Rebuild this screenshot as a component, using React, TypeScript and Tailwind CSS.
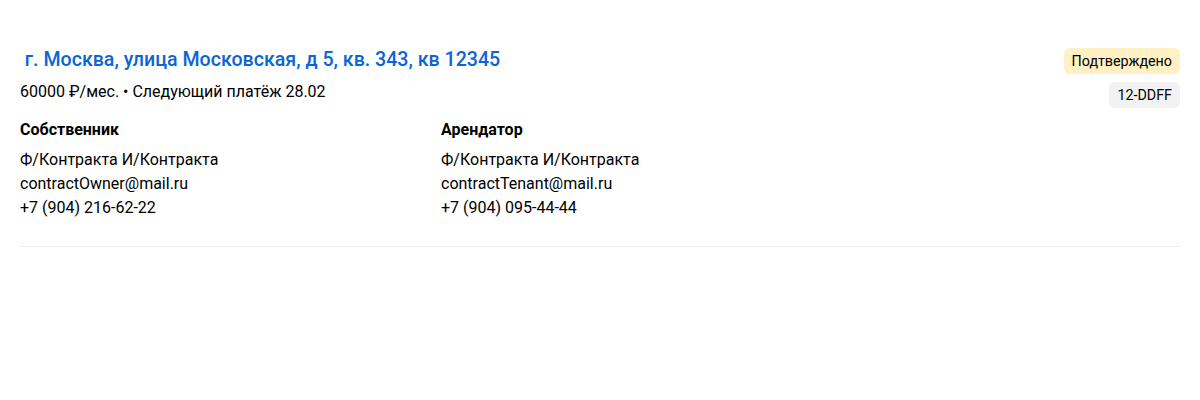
export default function App() {
  return (
    <div className="min-h-[400px] bg-white px-5 pt-12 text-black" style={{ fontFamily: "Roboto, 'Noto Sans', sans-serif" }}>
      <div className="flex items-start justify-between">
        <div>
          <a className="block text-[19.6px] font-medium leading-6 text-[#0a66d6]">
            &nbsp;г. Москва, улица Московская, д 5, кв. 343, кв 12345
          </a>
          <div className="mt-[10px] text-[16px] leading-5">60000 ₽/мес. • Следующий платёж 28.02</div>
        </div>
        <div className="flex flex-col items-end gap-2">
          <span className="rounded-md bg-[#fff1c4] px-2 py-1 text-[14.3px] leading-[18px]">Подтверждено</span>
          <span className="rounded-md bg-[#f2f2f2] px-2 py-1 text-[14.3px] leading-[18px]">12-DDFF</span>
        </div>
      </div>
      <div className="mt-[10px] flex pb-[26px] text-[16px] leading-6">
        <div className="w-[421px]">
          <div className="mb-[6px] font-bold">Собственник</div>
          <div>Ф/Контракта И/Контракта</div>
          <div>contractOwner@mail.ru</div>
          <div>+7 (904) 216-62-22</div>
        </div>
        <div>
          <div className="mb-[6px] font-bold">Арендатор</div>
          <div>Ф/Контракта И/Контракта</div>
          <div>contractTenant@mail.ru</div>
          <div>+7 (904) 095-44-44</div>
        </div>
      </div>
      <div className="h-px bg-[#ebebeb]" />
    </div>
  );
}
